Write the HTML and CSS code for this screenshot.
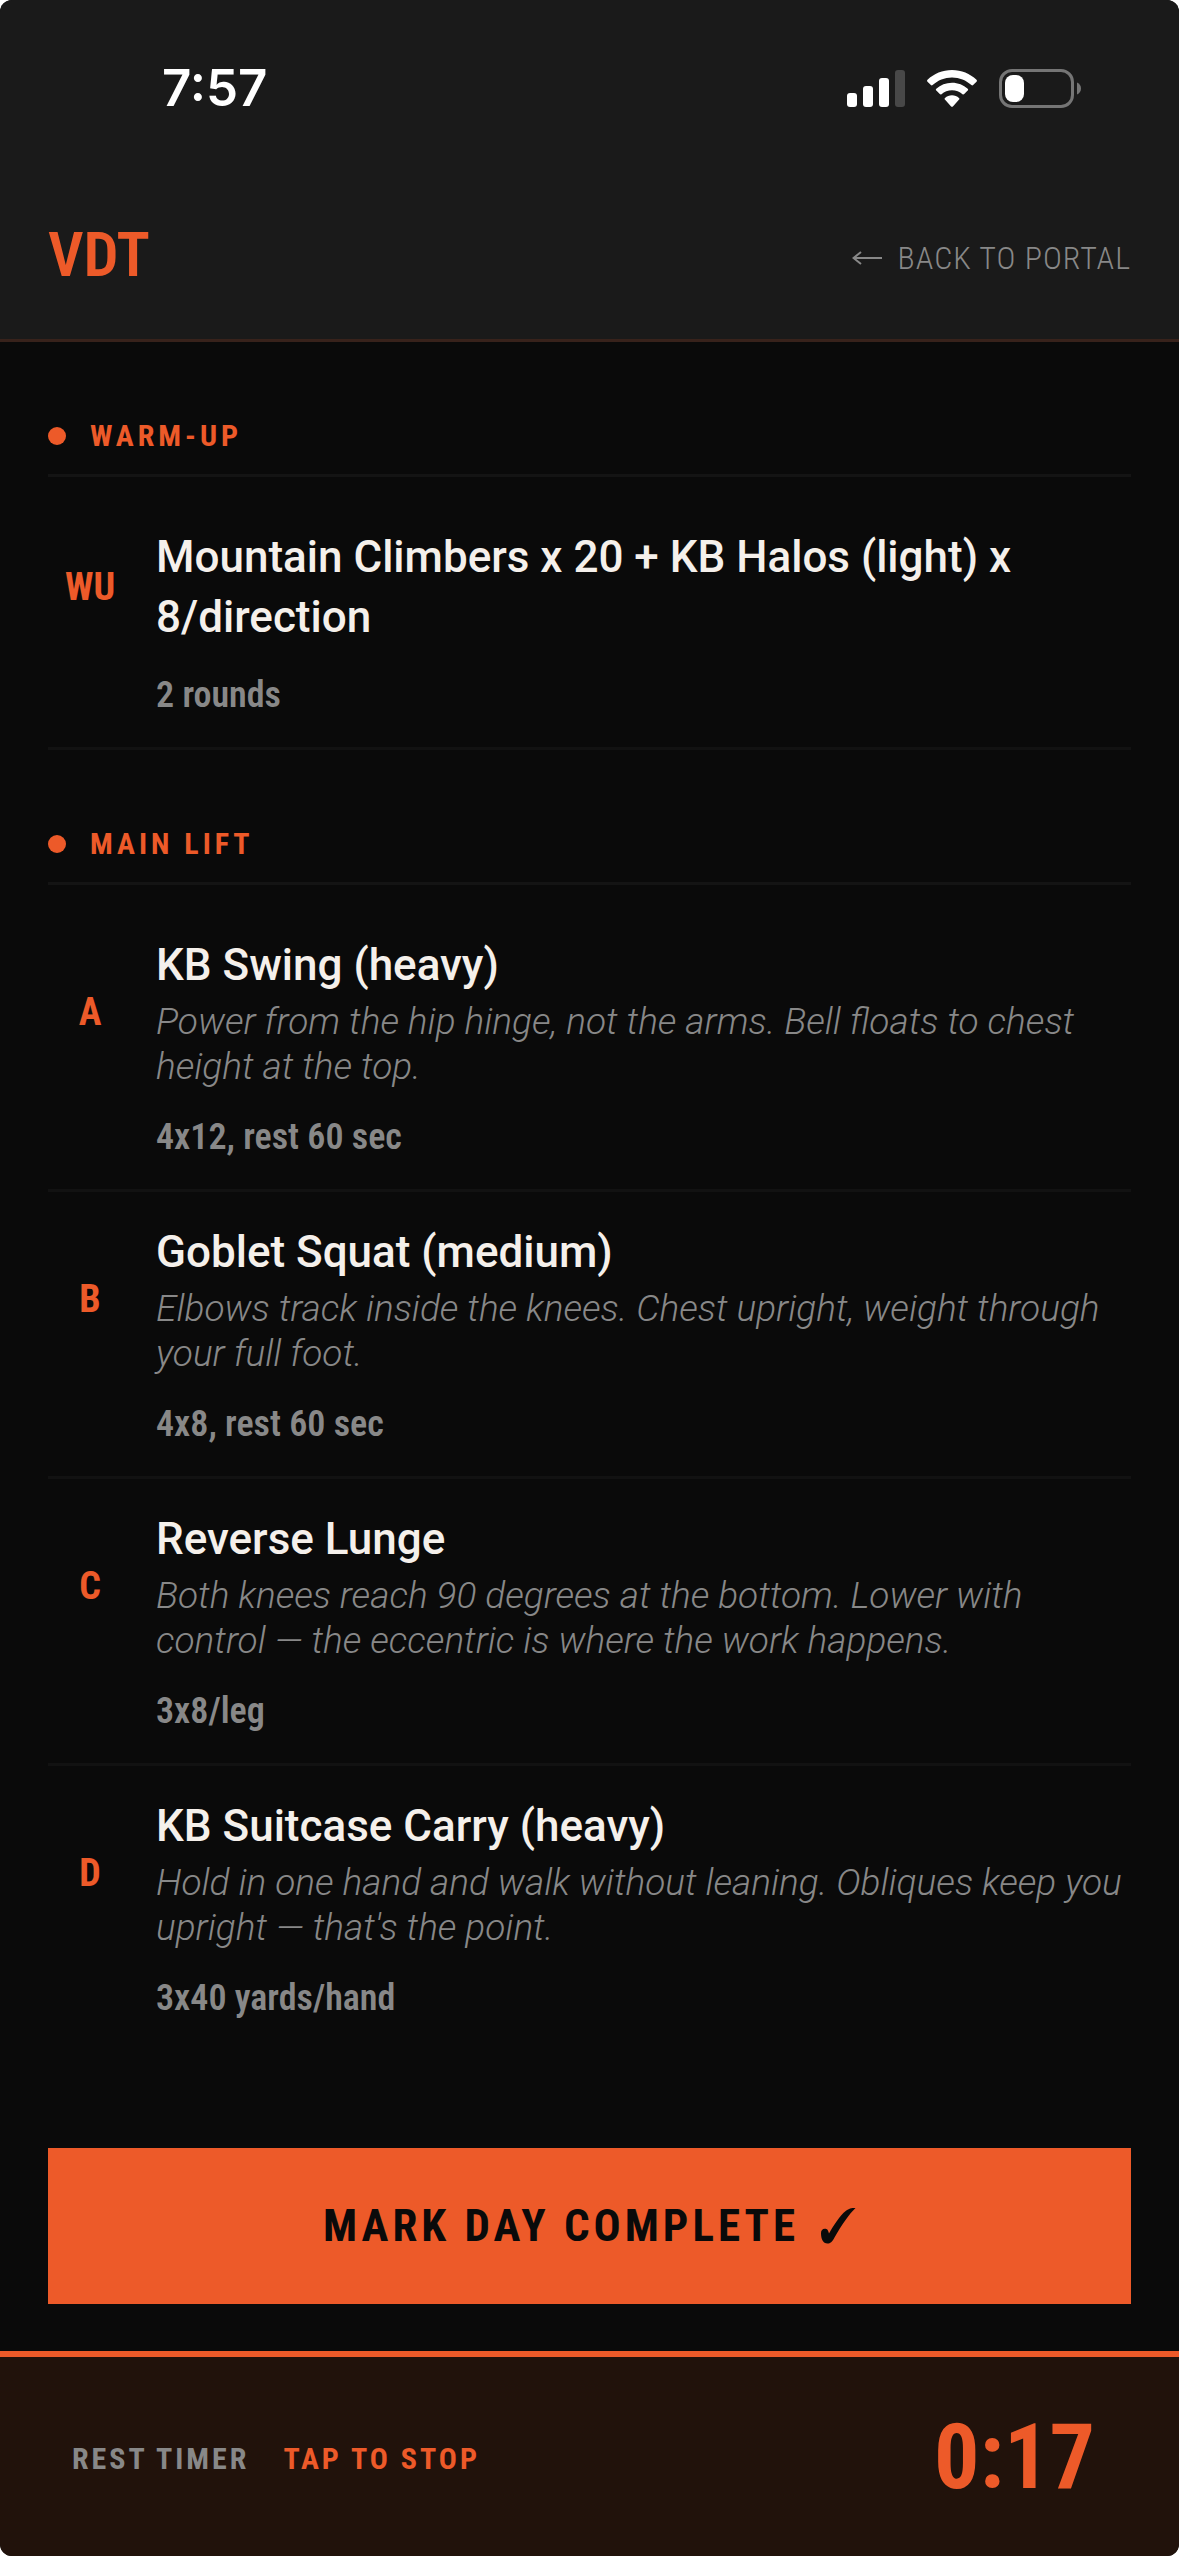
FILE: index.html
```html
<!DOCTYPE html>
<html lang="en">
<head>
    <meta charset="UTF-8">
    <meta name="viewport" content="width=device-width, initial-scale=1.0">
    <title>VDT</title>
    <link rel="stylesheet" href="styles.css">
</head>
<body>
<div class="app">

    <!-- Header -->
    <header class="header">
        <div class="status-bar">
            <span class="clock">7:57</span>
            <div class="status-icons">
                <svg width="58" height="37" viewBox="0 0 58 37" fill="#fff" aria-hidden="true">
                    <rect x="0" y="23" width="10" height="14" rx="3"/>
                    <rect x="16" y="16" width="10" height="21" rx="3"/>
                    <rect x="32" y="8" width="10" height="29" rx="3"/>
                    <rect x="48" y="0" width="10" height="37" rx="3" fill="#484848"/>
                </svg>
                <svg width="50" height="37" viewBox="0 0 50 37" fill="#fff" aria-hidden="true">
                    <path d="M25 0C34.500 0 43 3.600 49.500 9.800c.6.600.6 1.300 0 1.900l-3.400 3.400c-.5.500-1.200.5-1.700 0C39.200 10.300 32.400 7.500 25 7.500S10.800 10.300 5.600 15.100c-.5.500-1.200.5-1.700 0L.5 11.700c-.6-.6-.6-1.300 0-1.900C7 3.600 15.500 0 25 0z"/>
                    <path d="M25 12.700c6 0 11.500 2.300 15.700 6 .6.600.6 1.300 0 1.900l-3.500 3.500c-.5.500-1.200.5-1.700.1C32.700 21.700 29 20.200 25 20.200s-7.700 1.500-10.500 4c-.5.400-1.200.4-1.700-.1l-3.500-3.500c-.6-.6-.6-1.300 0-1.900 4.200-3.700 9.700-6 15.700-6z"/>
                    <path d="M25 25.300c2.700 0 5.100 1 7 2.600.6.500.6 1.200.1 1.700L25.900 36.400c-.5.500-1.300.5-1.800 0l-6.200-6.800c-.5-.5-.5-1.200.1-1.700 1.900-1.600 4.300-2.600 7-2.600z"/>
                </svg>
                <svg width="82" height="39" viewBox="0 0 82 39" aria-hidden="true">
                    <rect x="1.500" y="1.500" width="72" height="36" rx="11.500" fill="none" stroke="#757575" stroke-width="3"/>
                    <rect x="6" y="6" width="19" height="27" rx="8" fill="#fff"/>
                    <path d="M78 13.500c2.600 1 4 3.400 4 6s-1.400 5-4 6z" fill="#757575"/>
                </svg>
            </div>
        </div>
        <nav class="navbar">
            <h1 class="logo">VDT</h1>
            <a href="#" class="back-link">
                <svg width="30" height="14" viewBox="0 0 30 14" fill="none" stroke="currentColor" stroke-width="2" aria-hidden="true">
                    <path d="M9 1L1.500 7L9 13M1.500 7H30"/>
                </svg>
                BACK TO PORTAL
            </a>
        </nav>
    </header>

    <main class="workout">
        <!-- Warm-up -->
        <section class="block">
            <h2 class="block-title">WARM-UP</h2>
            <div class="exercise">
                <span class="tag">WU</span>
                <div class="info">
                    <h3>Mountain Climbers x 20 + KB Halos (light) x 8/direction</h3>
                </div>
                <p class="sets">2 rounds</p>
            </div>
        </section>

        <!-- Main lift -->
        <section class="block">
            <h2 class="block-title">MAIN LIFT</h2>
            <div class="exercise">
                <span class="tag">A</span>
                <div class="info">
                    <h3>KB Swing (heavy)</h3>
                    <p class="cue">Power from the hip hinge, not the arms. Bell floats to chest height at the top.</p>
                </div>
                <p class="sets">4x12, rest 60 sec</p>
            </div>
            <div class="exercise">
                <span class="tag">B</span>
                <div class="info">
                    <h3>Goblet Squat (medium)</h3>
                    <p class="cue">Elbows track inside the knees. Chest upright, weight through your full foot.</p>
                </div>
                <p class="sets">4x8, rest 60 sec</p>
            </div>
            <div class="exercise">
                <span class="tag">C</span>
                <div class="info">
                    <h3>Reverse Lunge</h3>
                    <p class="cue">Both knees reach 90 degrees at the bottom. Lower with control — the eccentric is where the work happens.</p>
                </div>
                <p class="sets">3x8/leg</p>
            </div>
            <div class="exercise last">
                <span class="tag">D</span>
                <div class="info">
                    <h3>KB Suitcase Carry (heavy)</h3>
                    <p class="cue">Hold in one hand and walk without leaning. Obliques keep you upright — that's the point.</p>
                </div>
                <p class="sets">3x40 yards/hand</p>
            </div>
        </section>

        <button class="complete-button" type="button">
            MARK DAY COMPLETE
            <svg width="35" height="36" viewBox="0 0 35 36" aria-hidden="true">
                <path d="M0 25c0-2.600 1.500-4.200 3.800-4.200 2.600 0 3.200 1.200 4.200 4.800C13 17 18.500 8 25 2.800 28 .5 30 0 34.500 0 28.500 5.500 20 18 13.500 29.500 10.800 34.300 9.500 35.500 6.500 35.500 2 35.500 0 31 0 25z" fill="currentColor"/>
            </svg>
        </button>
    </main>

    <!-- Rest timer -->
    <button class="rest-timer" type="button">
        <span class="timer-label">REST TIMER</span>
        <span class="timer-action">TAP TO STOP</span>
        <span class="timer-value">0:17</span>
    </button>

</div>
</body>
</html>
```
FILE: styles.css
```css
* {
    margin: 0;
    padding: 0;
    box-sizing: border-box;
}

body {
    font-family: Roboto, "Liberation Sans", sans-serif;
    background-color: #fff;
    color: #f5f0eb;
}

button {
    border: none;
    cursor: pointer;
}

.app {
    min-height: 100vh;
    display: flex;
    flex-direction: column;
    background-color: #0a0a0a;
    border-radius: 12px;
    overflow: hidden;
}

/* condensed face for labels, tags and buttons */
.logo,
.back-link,
.block-title,
.tag,
.sets,
.complete-button,
.rest-timer {
    font-family: "Roboto Condensed", "Liberation Sans Narrow", Roboto, sans-serif;
}

/* Header */
.header {
    background-color: #1a1a1a;
    border-bottom: 3px solid #38221b;
}

.status-bar {
    display: flex;
    justify-content: space-between;
    align-items: center;
    padding: 56px 98px 0 162px;
}

.clock {
    font-family: Inter, sans-serif;
    font-size: 51px;
    line-height: 64px;
    font-weight: 600;
    color: #fff;
}

.status-icons {
    display: flex;
    align-items: center;
    gap: 22px;
}

.navbar {
    display: flex;
    justify-content: space-between;
    align-items: center;
    padding: 91px 48px 40px;
}

.logo {
    font-size: 62px;
    line-height: 88px;
    font-weight: 600;
    color: #ed5a29;
}

.back-link {
    display: flex;
    align-items: center;
    gap: 16px;
    padding-top: 6px;
    font-size: 32px;
    line-height: 44px;
    font-weight: 300;
    letter-spacing: 1px;
    color: #888;
    text-decoration: none;
}

/* Workout list */
.workout {
    flex: 1;
    padding: 0 48px 47px;
}

.block {
    padding-top: 72px;
}

.block-title {
    display: flex;
    align-items: center;
    gap: 24px;
    padding-bottom: 16px;
    margin-bottom: 20px;
    border-bottom: 3px solid #141414;
    font-size: 30px;
    line-height: 44px;
    font-weight: 700;
    letter-spacing: 4px;
    color: #ed5a29;
}

.block-title::before {
    content: "";
    width: 18px;
    height: 18px;
    border-radius: 50%;
    background-color: #ed5a29;
}

.exercise {
    display: grid;
    grid-template-columns: 84px 1fr;
    align-items: center;
    column-gap: 24px;
    row-gap: 26px;
    padding: 30px 0;
    border-bottom: 3px solid #121212;
}

.exercise.last {
    border-bottom: none;
}

.tag {
    text-align: center;
    font-size: 38px;
    font-weight: 700;
    color: #ed5a29;
}

.info h3 {
    font-size: 44px;
    line-height: 60px;
    font-weight: 500;
}

.cue {
    margin-top: 4px;
    font-size: 37px;
    line-height: 45px;
    font-weight: 300;
    font-style: italic;
    color: #888;
}

.sets {
    grid-column: 2;
    font-size: 36px;
    line-height: 44px;
    font-weight: 600;
    color: #888;
}

.complete-button {
    width: 100%;
    display: flex;
    justify-content: center;
    align-items: center;
    gap: 22px;
    margin-top: 98px;
    padding: 48px 24px;
    background-color: #ed5a29;
    color: #0a0a0a;
    font-size: 45px;
    line-height: 60px;
    font-weight: 700;
    letter-spacing: 4px;
}

/* Rest timer bar */
.rest-timer {
    width: 100%;
    display: flex;
    align-items: center;
    gap: 34px;
    padding: 41px 84px 38px 72px;
    border-top: 6px solid #ed5a29;
    background-color: #21120b;
    font-size: 30px;
    font-weight: 700;
    letter-spacing: 3px;
    color: #ed5a29;
}

.timer-label {
    color: #888;
}

.timer-value {
    margin-left: auto;
    font-size: 90px;
    line-height: 120px;
    letter-spacing: 0;
}
```
